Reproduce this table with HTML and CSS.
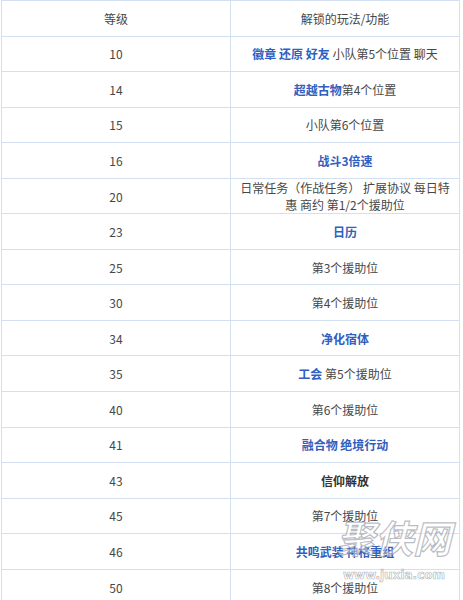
FILE: index.html
```html
<!DOCTYPE html>
<html lang="zh">
<head>
<meta charset="utf-8">
<link rel="stylesheet" href="styles.css">
</head>
<body>
<div class="page">
<table class="levels">
  <tr><td>等级</td><td>解锁的玩法/功能</td></tr>
  <tr><td>10</td><td><b class="lk">徽章</b> <b class="lk">还原</b> <b class="lk">好友</b> 小队第5个位置 聊天</td></tr>
  <tr><td>14</td><td><b class="lk">超越古物</b>第4个位置</td></tr>
  <tr><td>15</td><td>小队第6个位置</td></tr>
  <tr><td>16</td><td><b class="lk">战斗3倍速</b></td></tr>
  <tr><td>20</td><td>日常任务（作战任务） 扩展协议 每日特惠 商约 第1/2个援助位</td></tr>
  <tr><td>23</td><td><b class="lk">日历</b></td></tr>
  <tr><td>25</td><td>第3个援助位</td></tr>
  <tr><td>30</td><td>第4个援助位</td></tr>
  <tr><td>34</td><td><b class="lk">净化宿体</b></td></tr>
  <tr><td>35</td><td><b class="lk">工会</b> 第5个援助位</td></tr>
  <tr><td>40</td><td>第6个援助位</td></tr>
  <tr><td>41</td><td><b class="lk">融合物</b> <b class="lk">绝境行动</b></td></tr>
  <tr><td>43</td><td><b class="dk">信仰解放</b></td></tr>
  <tr><td>45</td><td>第7个援助位</td></tr>
  <tr><td>46</td><td><b class="lk">共鸣武装 神格重组</b></td></tr>
  <tr><td>50</td><td>第8个援助位</td></tr>
</table>
<div class="wm">
  <span class="wm-big">聚侠网</span>
  <span class="wm-url">www.juxia.com</span>
</div>
</div>
</body>
</html>
```
FILE: styles.css
```css
html, body {
  margin: 0;
  padding: 0;
  background: #ffffff;
}
.page {
  position: relative;
  width: 463px;
  height: 600px;
  overflow: hidden;
}
.levels {
  margin-left: 1px;
  width: 459px;
  border-collapse: collapse;
  table-layout: fixed;
  font-family: "Noto Sans CJK SC", "Noto Sans", sans-serif;
  font-size: 12px;
  color: #474747;
}
.levels td {
  border: 1px solid #d3e0f1;
  height: 34.56px;
  padding: 0 8px;
  text-align: center;
  vertical-align: middle;
  line-height: 17px;
  box-sizing: content-box;
}
.levels td:first-child {
  width: 212px;
}
.lk {
  color: #2f5fbf;
  font-weight: bold;
}
.dk {
  color: #333333;
  font-weight: bold;
}
.wm {
  position: absolute;
  left: 330px;
  top: 506px;
  width: 128px;
  display: flex;
  flex-direction: column;
  align-items: center;
  white-space: nowrap;
  pointer-events: none;
}
.wm-big {
  font-family: "Noto Sans CJK SC", sans-serif;
  font-size: 38px;
  font-style: italic;
  font-weight: bold;
  color: rgba(255, 255, 255, 0.45);
  -webkit-text-stroke: 1.2px rgba(140, 145, 155, 0.6);
  line-height: 62px;
}
.wm-url {
  font-family: "DejaVu Sans", sans-serif;
  font-size: 12px;
  font-weight: bold;
  color: rgba(255, 255, 255, 0.5);
  -webkit-text-stroke: 0.7px rgba(140, 145, 155, 0.65);
  line-height: 14px;
}
```
